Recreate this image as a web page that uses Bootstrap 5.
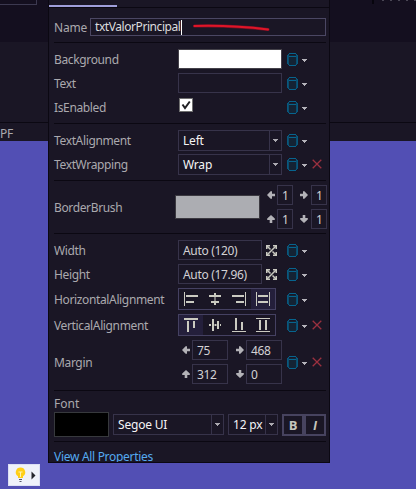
<!DOCTYPE html>
<html lang="en">
<head>
<meta charset="utf-8">
<meta name="viewport" content="width=device-width, initial-scale=1">
<title>Properties</title>
<link href="https://cdn.jsdelivr.net/npm/bootstrap@5.3.0/dist/css/bootstrap.min.css" rel="stylesheet">
<style>
body{width:416px;height:489px;overflow:hidden;background:#524fb4;font:12px/16px "Noto Sans","Open Sans",sans-serif;color:#aaa9ae}
svg{display:block;flex:none}
.stage{height:489px}
.side{height:141px;background:#1a1625}
.side-left{width:48px;flex:none}
.side-right{width:86px;flex:none;overflow:hidden}
.side-top{height:42px;background:#140f1f}
.side-mid{height:80px}
.side-rule{height:1px;background:#0b0812}
.stub{width:37px;height:5px;border:solid #3c3950;border-width:0 1px 1px 0}
.pf{line-height:16px;margin-top:3px;letter-spacing:-.2px}
.tick{width:2px;height:4px;background:#07050d;margin-left:42px}
.specks{width:34px;height:1px;margin-left:8px;background:repeating-linear-gradient(90deg,#4a4755 0 2px,transparent 2px 8px)}
.panel{width:282px;flex:none;height:463px;background:#1a1625;border:solid #0b0812;border-width:0 1px 1px;overflow:hidden}
.tabs{height:8px;border-bottom:1px solid #0b0812}
.tab-on{width:68px;height:2px;background:#a09fdb;margin-top:5px}
.body-in{padding:0 3px 0 5px}
.rule{height:1px;background:#0b0812;flex:none}
.prop{height:24px}
.prop26{height:26px}
.prop48{height:48px}
.brush{margin:2px 0}
.brush-grid{display:grid;grid-template:24px 24px/10px 23px 11px 16px;align-items:center;margin-left:7px}
.margin-grid{display:grid;grid-template:24px 24px/10px 44px 10px 36px;align-items:center;margin-left:4px}
.lbl{width:124px;flex:none;white-space:nowrap;padding-top:2px;letter-spacing:-.36px}
.fld{width:109px;flex:none}
.box{height:20px;border:1px solid #37334a;padding-left:4px;color:#d2d1d4;line-height:19px;white-space:nowrap;letter-spacing:-.32px}
.combo{height:21px;border:1px solid #37334a;color:#f4f4f5;line-height:20px;padding-left:4px;white-space:nowrap;letter-spacing:-.2px}
.combo .drop{width:12px;border-left:1px solid #37334a}
.w104{width:104px}.w84{width:84px}.w36{width:36px}.w16{width:16px}.w111{width:111px}.w50{width:50px}
.name-row{height:34px;padding-top:4px}
.name-row .txt{width:36px;flex:none;padding-top:2px;letter-spacing:-.15px}
.name-box{width:236px;height:18px;border:1px solid #4b4763;padding-left:4px;color:#dcdcde;line-height:18px;letter-spacing:-.43px}
.caret{width:1px;height:15px;background:#fff}
.white-sw{background:#fff;border:1px solid #444149}
.gray-sw{width:85px;height:24px;background:#acadb2;border:1px solid #3b3940;margin-left:-3px;flex:none}
.black-sw{width:55px;height:25px;background:#000;border:1px solid #37393d}
.chk{width:14px;height:14px;background:#fff;border:1px solid #707070;margin-left:1px;margin-top:-4px}
.seg{width:98px;height:22px;border:1px solid #454162}
.seg span{width:24px;height:20px}
.seg .on{background:#241f3b}
.fmt{width:22px;height:22px;border:2px solid #47435f;color:#c6c5bd;font:700 13px/19px "Open Sans","Noto Sans",sans-serif}
.fmt-i{font-family:"Liberation Sans",sans-serif;font-style:italic}
.cross{margin-left:5px}
.font-head{height:21px;padding-top:5px}
.font-row{height:25px;gap:4px;margin-bottom:4px}
.link-all{height:20px;color:#55aaf0;padding-top:7px;letter-spacing:-.3px;white-space:nowrap}
.bulb{left:8px;top:464px;width:32px;height:22px;background:#eff1fa;border:1px solid #dcdff4}
.scribble{left:189px;top:20px}
</style>
<script src="https://cdn.jsdelivr.net/npm/bootstrap@5.3.0/dist/js/bootstrap.bundle.min.js"></script>
</head>
<body>
<svg width="0" height="0" class="position-absolute">
<symbol id="db" viewBox="0 0 20 13"><path d="M1 2h9v9l-1.500 1.500h-6L1 11Z" fill="#142334"/><g fill="none" stroke="#07648e"><path d="M.9 2v9M10.100 2v9" stroke-width="1.500"/><path d="M2 .500h7M2 12.500h7M2 3.500h7"/><path d="M1 2L2.500.800M10 2L8.500.800M1 11l1.500 1.200M10 11l-1.500 1.200"/></g><path d="M15 6h5v1h-1v1h-1v1h-1V8h-1V7h-1Z" fill="#b5b3ba"/></symbol>
<symbol id="x" viewBox="0 0 10 10"><path d="M.7.700l8.600 8.600M9.300.700L.700 9.300" stroke="#9b303f" stroke-width="1.300" fill="none"/></symbol>
<symbol id="dn" viewBox="0 0 5 3"><path d="M0 0h5v1H4v1H3v1H2V2H1V1H0Z" fill="#aba9b0"/></symbol>
<symbol id="ar" viewBox="0 0 8 8"><path d="M8 2.700H5V.200H3.600L0 4l3.600 3.800H5V5.300h3Z" fill="#b3b2b7"/></symbol>
<symbol id="ex" viewBox="0 0 11 11"><path d="M0 0h4v1.500H1.500V4H0ZM7 0h4v4H9.500V1.500H7ZM0 7h1.500v2.500H4V11H0ZM9.500 7H11v4H7V9.500h2.500Z" fill="#c9c9c0"/><path d="M1 1l3.500 3.500M10 1L1 10M6.500 6.500L10 10" stroke="#c9c9c0" stroke-width="1.500"/></symbol>
</svg>
<div class="stage d-flex align-items-start position-relative">
  <div class="side side-left">
    <div class="side-top"><div class="stub"></div></div>
    <div class="side-mid"></div><div class="side-rule"></div>
    <div class="pf">PF</div>
  </div>
  <div class="panel">
    <div class="tabs d-flex"><div class="tab-on"></div></div>
    <div class="body-in">
      <div class="name-row d-flex align-items-center"><div class="txt">Name</div><div class="name-box d-flex align-items-center"><span>txtValorPrincipal</span><i class="caret"></i></div></div>
      <div class="rule mb-1"></div>
      <div class="prop d-flex align-items-center"><div class="lbl">Background</div><div class="fld"><div class="box white-sw w104"></div></div><svg width="20" height="13"><use href="#db"/></svg></div>
      <div class="prop d-flex align-items-center"><div class="lbl">Text</div><div class="fld"><div class="box w104"></div></div><svg width="20" height="13"><use href="#db"/></svg></div>
      <div class="prop d-flex align-items-center"><div class="lbl">IsEnabled</div><div class="fld"><div class="chk"><svg width="12" height="12"><path d="M2.500 5.500l2.500 3.500L9.800 2.500" fill="none" stroke="#202024" stroke-width="2"/></svg></div></div><svg width="20" height="13"><use href="#db"/></svg></div>
      <div class="pt-1"></div>
      <div class="rule mb-1"></div>
      <div class="prop d-flex align-items-center"><div class="lbl">TextAlignment</div><div class="fld"><div class="combo w104 d-flex justify-content-between">Left<span class="drop d-flex align-items-center justify-content-center"><svg width="5" height="3"><use href="#dn"/></svg></span></div></div><svg width="20" height="13"><use href="#db"/></svg></div>
      <div class="prop d-flex align-items-center"><div class="lbl">TextWrapping</div><div class="fld"><div class="combo w104 d-flex justify-content-between">Wrap<span class="drop d-flex align-items-center justify-content-center"><svg width="5" height="3"><use href="#dn"/></svg></span></div></div><svg width="20" height="13"><use href="#db"/></svg><svg class="cross" width="10" height="10"><use href="#x"/></svg></div>
      <div class="pt-1"></div>
      <div class="rule"></div>
      <div class="prop48 d-flex align-items-center brush">
        <div class="lbl">BorderBrush</div><div class="gray-sw"></div>
        <div class="brush-grid">
          <svg width="8" height="8"><use href="#ar"/></svg><div class="box w16">1</div><svg width="8" height="8"><use href="#ar" transform="rotate(180 4 4)"/></svg><div class="box w16">1</div>
          <svg width="8" height="8"><use href="#ar" transform="rotate(90 4 4)"/></svg><div class="box w16">1</div><svg width="8" height="8"><use href="#ar" transform="rotate(270 4 4)"/></svg><div class="box w16">1</div>
        </div>
      </div>
      <div class="rule mb-1"></div>
      <div class="prop d-flex align-items-center"><div class="lbl">Width</div><div class="fld d-flex align-items-center"><div class="box w84 me-1">Auto (120)</div><svg width="11" height="11"><use href="#ex"/></svg></div><svg width="20" height="13"><use href="#db"/></svg></div>
      <div class="prop d-flex align-items-center"><div class="lbl">Height</div><div class="fld d-flex align-items-center"><div class="box w84 me-1">Auto (17.96)</div><svg width="11" height="11"><use href="#ex"/></svg></div><svg width="20" height="13"><use href="#db"/></svg></div>
      <div class="prop26 d-flex align-items-center"><div class="lbl">HorizontalAlignment</div><div class="fld"><div class="seg d-flex">
        <span><svg width="24" height="20" fill="#cbcbc1"><path d="M5 3h1v14H5zM7 6h12v2H7zM7 12h8v2H7z"/></svg></span>
        <span><svg width="24" height="20" fill="#cbcbc1"><path d="M6 6h12v2H6zM8 12h8v2H8zM11 4h2v12h-2z"/><path d="M10 8.500h4v3h-4z" fill="#1a1625"/><path d="M11 9.500h2v1h-2z"/></svg></span>
        <span><svg width="24" height="20" fill="#cbcbc1"><path d="M18 3h1v14h-1zM5 6h12v2H5zM9 12h8v2H9z"/></svg></span>
        <span class="on"><svg width="24" height="20" fill="#cbcbc1"><path d="M5 3h1v14H5zM18 3h1v14h-1zM7 6h10v2H7zM7 12h10v2H7z"/></svg></span>
      </div></div><svg width="20" height="13"><use href="#db"/></svg></div>
      <div class="prop26 d-flex align-items-center"><div class="lbl">VerticalAlignment</div><div class="fld"><div class="seg d-flex">
        <span class="on"><svg width="24" height="20" fill="#cbcbc1"><path d="M5 3h14v2H5zM8 6h2v11H8zM14 6h2v7h-2z"/></svg></span>
        <span><svg width="24" height="20" fill="#cbcbc1"><path d="M9 4h2v12H9zM14 6h2v8h-2zM6 9h2v2H6zM11.500 9h2v2h-2zM17 9h1v2h-1z"/></svg></span>
        <span><svg width="24" height="20" fill="#cbcbc1"><path d="M5 16h14v1H5zM8 3h2v12H8zM14 7h2v8h-2z"/></svg></span>
        <span><svg width="24" height="20" fill="#cbcbc1"><path d="M5 3h14v1H5zM5 16h14v1H5zM8 5h2v10H8zM14 5h2v10h-2z"/></svg></span>
      </div></div><svg width="20" height="13"><use href="#db"/></svg><svg class="cross" width="10" height="10"><use href="#x"/></svg></div>
      <div class="prop48 d-flex align-items-center"><div class="lbl">Margin</div><div class="fld"><div class="margin-grid">
        <svg width="8" height="8"><use href="#ar"/></svg><div class="box w36">75</div><svg width="8" height="8"><use href="#ar" transform="rotate(180 4 4)"/></svg><div class="box w36">468</div>
        <svg width="8" height="8"><use href="#ar" transform="rotate(90 4 4)"/></svg><div class="box w36">312</div><svg width="8" height="8"><use href="#ar" transform="rotate(270 4 4)"/></svg><div class="box w36">0</div>
      </div></div><svg width="20" height="13"><use href="#db"/></svg><svg class="cross" width="10" height="10"><use href="#x"/></svg></div>
      <div class="pt-1"></div>
      <div class="rule"></div>
      <div class="font-head">Font</div>
      <div class="font-row d-flex align-items-center">
        <div class="black-sw"></div>
        <div class="combo w111 d-flex justify-content-between">Segoe UI<span class="drop d-flex align-items-center justify-content-center"><svg width="5" height="3"><use href="#dn"/></svg></span></div>
        <div class="combo w50 d-flex justify-content-between">12 px<span class="drop d-flex align-items-center justify-content-center"><svg width="5" height="3"><use href="#dn"/></svg></span></div>
        <div class="d-flex"><div class="fmt text-center">B</div><div class="fmt fmt-i text-center">I</div></div>
      </div>
      <div class="rule"></div>
      <div class="link-all">View All Properties</div>
    </div>
  </div>
  <div class="side side-right">
    <div class="side-top"><div class="d-flex"><div class="tick"></div><div class="specks"></div></div></div>
    <div class="side-mid"></div><div class="side-rule"></div>
  </div>
  <svg class="scribble position-absolute" width="84" height="16" fill="none" stroke-linecap="round"><path d="M5.500 6Q43 5 79 9.500" stroke="#711125" stroke-width="3.200"/><path d="M5.500 6Q43 5 79 9.500" stroke="#e01528" stroke-width="2"/></svg>
  <div class="bulb position-absolute"><svg width="30" height="20"><path d="M11.500 2.500a4.700 4.700 0 0 0-2.500 8.700V13h5v-1.800A4.700 4.700 0 0 0 11.500 2.500Z" fill="#ffcf18"/><path d="M9.500 7h4M11.500 7v5" stroke="#fff3b0" fill="none"/><path d="M10 14.500h3M10.500 16.500h2" stroke="#55576b" fill="none"/><path d="M22.500 6.500v8l4-4Z" fill="#25252d"/></svg></div>
</div>
</body>
</html>
